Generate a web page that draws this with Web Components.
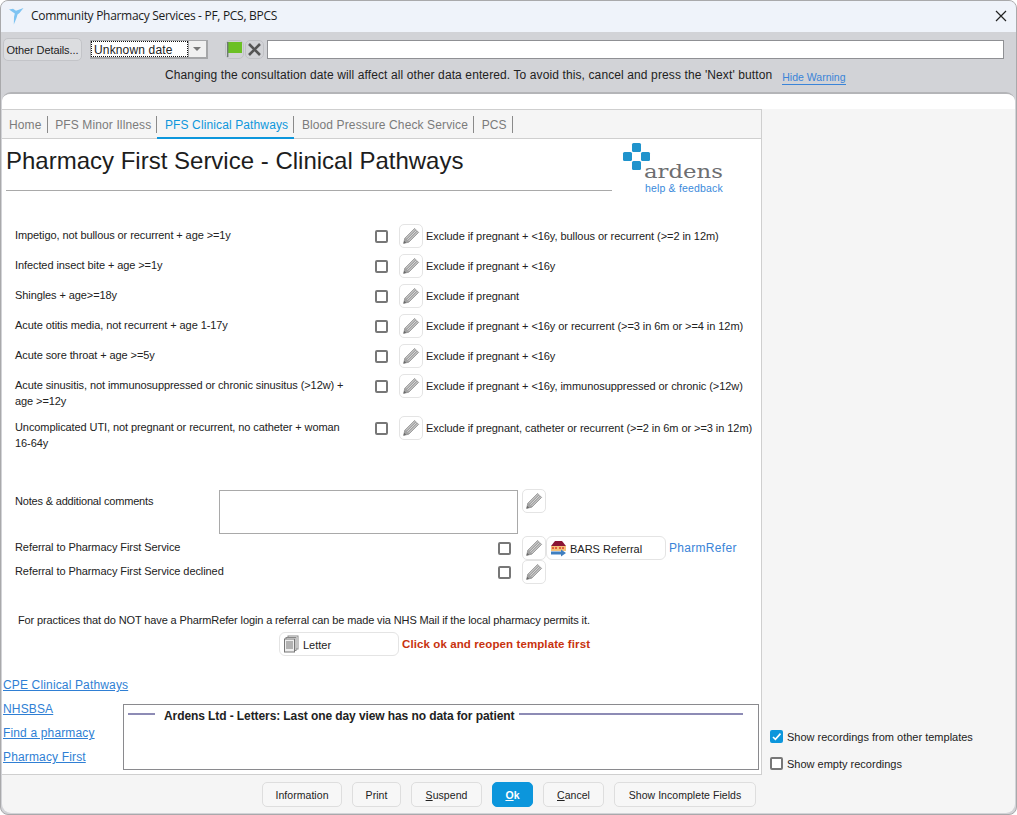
<!DOCTYPE html>
<html><head><meta charset="utf-8"><title>Community Pharmacy Services</title>
<style>
html,body{margin:0;padding:0;background:#fff;overflow:hidden}
body{font:11px "Liberation Sans",Arial,sans-serif;color:#222}
</style></head><body>
<app-window>
  <title-bar slot="title">Community Pharmacy Services - PF, PCS, BPCS</title-bar>
  <date-toolbar slot="toolbar"></date-toolbar>
  <tab-strip slot="tabs"></tab-strip>
  <pathways-page slot="page"></pathways-page>
  <side-rail slot="rail"></side-rail>
  <action-footer slot="footer"></action-footer>
</app-window>
<script>
function def(name, css, html, init){
  customElements.define(name, class extends HTMLElement{
    constructor(){super();const r=this.attachShadow({mode:'open'});
      r.innerHTML='<style>'+css+'</style>'+html;}
    connectedCallback(){ if(init&&!this._i){this._i=1;init.call(this,this.shadowRoot);} }
  });
}
const FONT='"Liberation Sans",Arial,sans-serif';
def('app-window',`
:host{display:block;width:1017px;height:815px;box-sizing:border-box}
.w{width:1017px;height:815px;box-sizing:border-box;border:1px solid #a9a9ab;border-radius:8px;background:#d2d3d7;display:flex;flex-direction:column;overflow:hidden}
.panel{flex:1;min-height:0;margin:0 1px 1px;background:#f5f5f5;border:1px solid #b4b5b8;border-width:2px 0 0;border-radius:9px;display:flex;flex-direction:column;overflow:hidden}
.cap{height:15px;background:#fff;flex:none}
.body{flex:1;min-height:0;display:flex}
.left{width:760px;flex:none;display:flex;flex-direction:column}
.content{flex:none;height:666px;background:#fff;border-right:1px solid #cfcfcf;border-bottom:1px solid #cfcfcf;box-sizing:border-box;display:flex;flex-direction:column}
.rail{flex:1;min-width:0}
`,`<div class="w"><slot name="title"></slot><slot name="toolbar"></slot>
<div class="panel"><div class="cap"></div><div class="body">
<div class="left"><div class="content"><slot name="tabs"></slot><slot name="page"></slot></div><slot name="footer"></slot></div>
<div class="rail"><slot name="rail"></slot></div></div></div></div>`);

def('title-bar',`
:host{display:flex;align-items:center;height:31px;box-sizing:border-box;padding:0 0 2px 8px;flex:none;background:#eff3fa;font:12px "Open Sans",sans-serif;color:#1c1c1c;letter-spacing:-.3px}
svg{flex:none}.t{margin-left:7px;flex:1;white-space:nowrap}
.x{width:12px;height:12px;margin-right:9px;flex:none}
`,`<svg width="15" height="18" viewBox="0 0 15 18"><path d="M0 2.500 4 1.800 7 3.800 14.500 1 10.500 6 8.500 7.500 7.500 11 4.800 17.500 5 10 5.800 6.500Z" fill="#7fc4f2"/></svg><span class="t"><slot></slot></span>
<svg class="x" viewBox="0 0 12 12"><path d="M1 1 11 11M11 1 1 11" stroke="#222" stroke-width="1.2"/></svg>`);

def('date-toolbar',`
:host{display:block;height:60px;flex:none;background:#d2d3d7;color:#222;font:12px ${FONT}}
.r1{display:flex;align-items:center;padding:6px 12px 0 2px;height:23px}
.od{width:79px;height:23px;box-sizing:border-box;border:1px solid #c3c4c8;border-radius:5px;background:#dcdde0;font-size:11px;display:flex;align-items:center;justify-content:center;letter-spacing:-.1px}
.sel{margin-left:8px;width:118px;height:19px;box-sizing:border-box;border:1px solid #a5a6a8;border-width:1px 2px 2px 1px;background:#fff;display:flex;font-size:12px}
.val{flex:1;outline:1px dotted #111;outline-offset:-1px;padding-left:3px;line-height:18px;letter-spacing:.15px}
.ar{width:17px;background:#f0f0f0;border-left:1px solid #a5a6a8;position:relative}
.ar:after{content:"";position:absolute;left:4px;top:6px;border:4px solid transparent;border-top:4px solid #777;border-bottom:0}
.ib{width:19px;height:19px;box-sizing:border-box;border:1px solid #c0c1c5;border-radius:5px;display:flex;align-items:center;justify-content:center}
.f{margin-left:17px}.x{margin-left:1px}
input{margin-left:3px;flex:1;height:19px;box-sizing:border-box;border:1px solid #8f9094;background:#fff;padding:0}
.r2{position:relative;text-align:center;height:22px;padding:7px 0 0 3px;line-height:14px;box-sizing:border-box;display:flex;margin-top:0}
.m{margin-left:161px;white-space:nowrap;letter-spacing:.11px}
a{margin-left:10px;color:#3a84d8;border-bottom:1px solid #3a84d8;font-size:10.5px;line-height:12px;height:13px;margin-top:3px;white-space:nowrap}
`,`<div class="r1"><div class="od">Other Details...</div>
<div class="sel"><div class="val">Unknown date</div><div class="ar"></div></div>
<div class="ib f"><svg width="17" height="17" viewBox="0 0 17 17"><rect x="2" y="1" width="14" height="11" fill="#6cc024"/><rect x="1" y="1" width="1.4" height="15" fill="#6d7a70"/></svg></div>
<div class="ib x"><svg width="15" height="15" viewBox="0 0 15 15"><path d="M2 2 13 13M13 2 2 13" stroke="#555" stroke-width="2.6"/></svg></div>
<input aria-label="comment"></div>
<div class="r2"><span class="m">Changing the consultation date will affect all other data entered. To avoid this, cancel and press the 'Next' button</span><a>Hide Warning</a></div>`);

def('tab-strip',`
:host{display:flex;height:30px;flex:none;box-sizing:border-box;background:#f5f5f5;border-top:1px solid #cfcfcf;border-bottom:1px solid #cfcfcf;font:12px ${FONT};color:#7b7b7b;letter-spacing:.12px}
.t{position:relative;display:flex;align-items:center;padding:2px 6px 0 7.7px;height:28px;white-space:nowrap;box-sizing:border-box}
.t:after{content:"";position:absolute;right:0;top:6px;height:17px;width:1px;background:#8a8a8a}
.f{padding-left:7px}
.a{color:#0d97dc;height:29px;border-bottom:2px solid #0d97dc;padding:3px 6px 0 7.7px}
`,`<div class="t f">Home</div><div class="t">PFS Minor Illness</div><div class="t a">PFS Clinical Pathways</div><div class="t">Blood Pressure Check Service</div><div class="t">PCS</div>`);

def('check-box',`
:host{display:inline-block;width:13px;height:13px;flex:none;box-sizing:border-box;border:2px solid #777;border-radius:2px;background:#fff}
:host([checked]){border-color:#0c96dc;background:#0c96dc}
svg{display:block;margin:-2px}
`,`<svg width="13" height="13" viewBox="0 0 13 13" style="display:none"><path d="M3 7 5.400 9.400 10.500 3.600" fill="none" stroke="#fff" stroke-width="1.6"/></svg>`,
function(r){if(this.hasAttribute('checked'))r.querySelector('svg').style.display='block';});

def('pencil-button',`
:host{display:inline-flex;width:24px;height:24px;flex:none;box-sizing:border-box;border:1px solid #e4e4e4;border-radius:5px;background:#fff;align-items:center;justify-content:center}
`,`<svg width="18" height="18" viewBox="0 0 18 18"><path d="M1.600 16.400 2.800 11.200 12.600 1.400 16.600 5.400 6.800 15.200Z" fill="#a3a3a3" stroke="#8a8a8a" stroke-width=".7"/><path d="M4 11.400 13.200 2.200M5.300 12.700 14.500 3.500M6.600 14 15.800 4.800" stroke="#e2e2e2" stroke-width=".8"/><path d="M1.600 16.400 2.200 13.800 4.200 15.800Z" fill="#6a6a6a"/></svg>`);

def('pathway-row',`
:host{display:flex;align-items:flex-start;padding-left:13px;min-height:30px;box-sizing:border-box}
.l{width:335px;padding-right:25px;flex:none;padding-top:7px;line-height:16px;margin-top:-1px;letter-spacing:-.09px}
check-box{margin:9px 0 0 0}pencil-button{margin:3px 0 0 11px}
.e{margin-left:3px;padding-top:7px;line-height:16px;white-space:nowrap;letter-spacing:-.06px}
`,`<div class="l"></div><check-box></check-box><pencil-button></pencil-button><div class="e"></div>`,
function(r){r.querySelector('.l').textContent=this.getAttribute('label');r.querySelector('.e').textContent=this.getAttribute('exclude');});

def('soft-button',`
:host{display:inline-flex;align-items:center;width:120px;height:24px;flex:none;box-sizing:border-box;border:1px solid #e4e4e4;border-radius:6px;background:#fff;font:11px ${FONT};color:#222;padding-left:3px}
.t{margin-left:3px;white-space:nowrap;padding-top:1px}
`,`<slot name="icon"></slot><span class="t"><slot></slot></span>`);

def('ardens-logo',`
:host{display:block;width:103px;flex:none;position:relative;height:56px}
svg{position:absolute;left:0;top:0}
.a{position:absolute;left:22px;top:17px;font:300 19px/24px "DejaVu Serif",serif;color:#6d6e71;transform:scaleX(1.2);transform-origin:0 0}
.h{position:absolute;left:23px;top:40px;font:10.5px/12px ${FONT};color:#3a8adb;white-space:nowrap;letter-spacing:.17px}
`,`<svg width="30" height="30" viewBox="0 0 30 30"><g fill="#1f93cc"><rect x="10" y="1" width="9" height="9" rx="1.5"/><rect x="1" y="10" width="9" height="9" rx="1.5"/><rect x="19" y="10" width="9" height="9" rx="1.5"/><rect x="10" y="19" width="9" height="9" rx="1.5"/></g></svg><div class="a">ardens</div><div class="h">help &amp; feedback</div>`);

def('pathways-page',`
:host{display:block;flex:1;min-height:0;background:#fff;font:11px ${FONT};color:#222}
.head{height:82px;box-sizing:border-box;display:flex;padding-left:4px;position:relative}
.hl{width:606px;flex:none;height:51px;border-bottom:1px solid #a9a9a9;margin-right:10px}
h1{margin:8px 0 0;font:400 24px/28px ${FONT};color:#1d1d1d;white-space:nowrap}
ardens-logo{margin-top:3px}
.rows{height:268px}
.notes{display:flex;padding-left:13px;height:47px}
.notes .l{width:204px;padding-top:6px;line-height:13px;letter-spacing:-.18px}
.ta{width:299px;height:44px;box-sizing:border-box;border:1px solid #a9a9a9;margin-top:1px}
.notes pencil-button{margin-left:4px}
.ref{display:flex;align-items:center;padding-left:13px;height:24px}
.ref .l{width:483px;flex:none;letter-spacing:-.08px;margin-top:-2px}
.ref pencil-button{margin-left:11px}
.pr{margin-left:3px;font-size:12px;color:#3a84d8;letter-spacing:.3px}
.np{margin:28px 0 0 16px;line-height:16px;letter-spacing:-.12px}
.let{display:flex;align-items:center;margin:4px 0 0 277px}
.red{margin-left:3px;font:700 11.5px ${FONT};color:#c8320e;letter-spacing:.1px}
.lk{display:flex;margin-top:17px}
a{color:#2f7fd4;text-decoration:underline;font-size:12px;line-height:24px;display:block;white-space:nowrap;letter-spacing:.15px}
.lnks{padding-left:1px;width:120px;flex:none}
.box{margin-top:31px;width:636px;height:66px;box-sizing:border-box;border:1px solid #8a8a8e;display:flex;align-items:flex-start;padding:3px 15px 0 4px;margin-left:0}
.ln{height:2px;background:#8d8bb5;margin-top:5px;flex:none}
.bt{font:700 12px/16px ${FONT};color:#222;white-space:nowrap;margin:0 5px 0 9px;letter-spacing:-.09px}
`,`<div class="head"><div class="hl"><h1>Pharmacy First Service - Clinical Pathways</h1></div><ardens-logo></ardens-logo></div>
<div class="rows">
<pathway-row label="Impetigo, not bullous or recurrent + age >=1y" exclude="Exclude if pregnant + <16y, bullous or recurrent (>=2 in 12m)"></pathway-row>
<pathway-row label="Infected insect bite + age >=1y" exclude="Exclude if pregnant + <16y"></pathway-row>
<pathway-row label="Shingles + age>=18y" exclude="Exclude if pregnant"></pathway-row>
<pathway-row label="Acute otitis media, not recurrent + age 1-17y" exclude="Exclude if pregnant + <16y or recurrent (>=3 in 6m or >=4 in 12m)"></pathway-row>
<pathway-row label="Acute sore throat + age >=5y" exclude="Exclude if pregnant + <16y"></pathway-row>
<pathway-row style="height:42px" label="Acute sinusitis, not immunosuppressed or chronic sinusitus (>12w) + age >=12y" exclude="Exclude if pregnant + <16y, immunosuppressed or chronic (>12w)"></pathway-row>
<pathway-row label="Uncomplicated UTI, not pregnant or recurrent, no catheter + woman 16-64y" exclude="Exclude if pregnant, catheter or recurrent (>=2 in 6m or >=3 in 12m)"></pathway-row>
</div>
<div class="notes"><div class="l">Notes &amp; additional comments</div><div class="ta"></div><pencil-button></pencil-button></div>
<div class="ref"><div class="l">Referral to Pharmacy First Service</div><check-box></check-box><pencil-button></pencil-button>
<soft-button><svg slot="icon" width="17" height="17" viewBox="0 0 17 17"><path d="M1 6 5 1H12L16 6Z" fill="#8a1535"/><rect x="1" y="6" width="15" height="5" fill="#f4c27a"/><path d="M2 7h2v2H2zM5 7h2v2H5zM9 7h2v2H9zM12 7h2v2h-2z" fill="#e2603c"/><path d="M1 11.500h10V9.500l5 3.500-5 3.500v-2H1z" fill="#3f7fc0"/></svg>BARS Referral</soft-button>
<span class="pr">PharmRefer</span></div>
<div class="ref"><div class="l">Referral to Pharmacy First Service declined</div><check-box></check-box><pencil-button></pencil-button></div>
<div class="np">For practices that do NOT have a PharmRefer login a referral can be made via NHS Mail if the local pharmacy permits it.</div>
<div class="let"><soft-button><svg slot="icon" width="17" height="18" viewBox="0 0 17 18"><rect x="5" y="1" width="10" height="13" fill="#fff" stroke="#888"/><rect x="3" y="2.500" width="10" height="13" fill="#fff" stroke="#888"/><rect x="1.500" y="4" width="10" height="13" fill="#eee" stroke="#777"/><path d="M3 7h7M3 9h7M3 11h7M3 13h7" stroke="#777"/></svg>Letter</soft-button><span class="red">Click ok and reopen template first</span></div>
<div class="lk"><div class="lnks"><a>CPE Clinical Pathways</a><a>NHSBSA</a><a>Find a pharmacy</a><a>Pharmacy First</a></div>
<div class="box"><div class="ln" style="width:27px"></div><div class="bt">Ardens Ltd - Letters: Last one day view has no data for patient</div><div class="ln" style="flex:1"></div></div></div>`);

def('side-rail',`
:host{display:block;height:100%;box-sizing:border-box;padding:621px 0 0 8px;font:11px ${FONT};color:#222}
.r{display:flex;align-items:center;height:13px}
.r+.r{margin-top:14px}
span{margin-left:4px;white-space:nowrap}
`,`<div class="r"><check-box checked></check-box><span>Show recordings from other templates</span></div><div class="r"><check-box></check-box><span>Show empty recordings</span></div>`);

def('action-footer',`
:host{display:flex;justify-content:flex-end;gap:10px;padding:7px 6px 0 0;font:10.5px ${FONT};color:#222;flex:none;letter-spacing:.05px}
.b{height:25px;box-sizing:border-box;border:1px solid #dedede;border-radius:5px;display:flex;align-items:center;justify-content:center;background:#f7f7f7;white-space:nowrap}
.ok{background:#0c96dc;border-color:#0c96dc;color:#fff;font-weight:700}
u{text-underline-offset:1px}
`,`<div class="b" style="width:80px">Information</div><div class="b" style="width:49px">Print</div><div class="b" style="width:71px"><span><u>S</u>uspend</span></div><div class="b ok" style="width:41px"><span><u>O</u>k</span></div><div class="b" style="width:61px"><span><u>C</u>ancel</span></div><div class="b" style="width:142px">Show Incomplete Fields</div>`);
</script>
</body></html>
